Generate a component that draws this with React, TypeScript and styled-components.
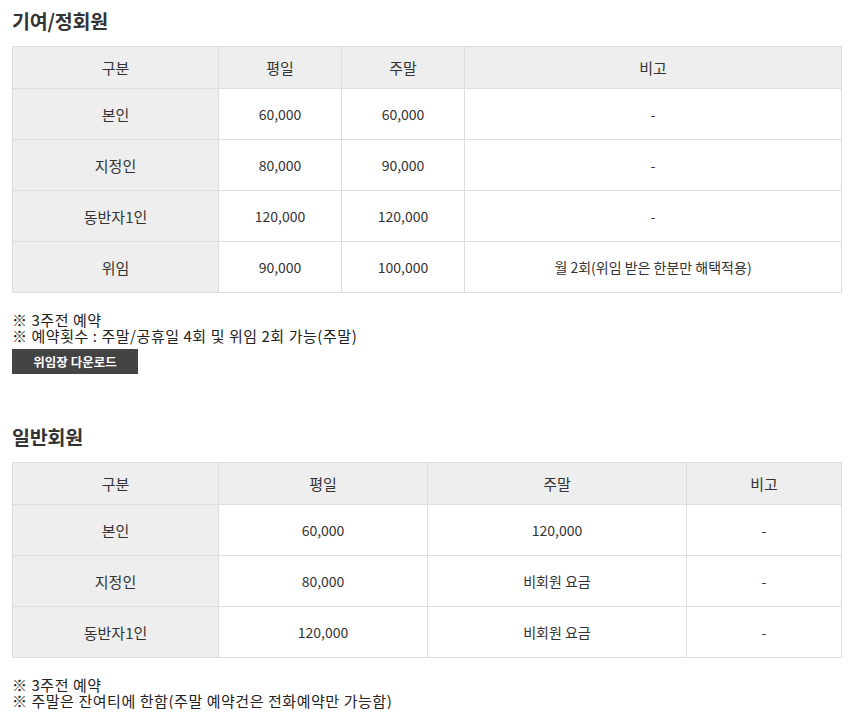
import React from 'react';
import styled, { createGlobalStyle } from 'styled-components';

const GlobalStyle = createGlobalStyle`
  body {
    margin: 0;
    background: #fff;
    font-family: "Noto Sans CJK KR", "Noto Sans", sans-serif;
    color: #333;
  }
`;

const Page = styled.div`
  padding: 4px 13px 0 12px;
  width: 830px;
`;

const Section = styled.section<{ gap?: number }>`
  margin-bottom: ${(p) => p.gap ?? 0}px;
`;

const Heading = styled.h3`
  margin: 0 0 9px;
  height: 33px;
  line-height: 33px;
  font-size: 19.5px;
  font-weight: 700;
  color: #333;
  letter-spacing: -0.2px;
`;

const Table = styled.table`
  width: 100%;
  border-collapse: collapse;
  table-layout: fixed;
  font-size: 14px;
  color: #333;
`;

const Th = styled.th<{ w?: number }>`
  width: ${(p) => (p.w ? `${p.w}px` : 'auto')};
  height: 41px;
  padding: 0;
  background: #eeeeee;
  border: 1px solid #dddddd;
  font-weight: 400;
  font-size: 15px;
  text-align: center;
`;

const Td = styled.td<{ head?: boolean }>`
  height: 50px;
  padding: 0;
  border: 1px solid #dddddd;
  text-align: center;
  background: ${(p) => (p.head ? '#eeeeee' : '#fff')};
  font-size: ${(p) => (p.head ? '15px' : '14px')};
`;

const Notes = styled.div`
  margin-top: 19px;
  font-size: 15px;
  line-height: 16px;
  letter-spacing: 0.55px;
  color: #222;
`;

const NoteLine = styled.div`
  height: 16px;
  white-space: nowrap;
`;

const DownloadButton = styled.button`
  display: block;
  margin-top: 5px;
  width: 126px;
  height: 25px;
  padding: 0;
  border: none;
  background: #444;
  color: #fff;
  font-family: inherit;
  font-size: 12.5px;
  font-weight: 700;
  cursor: pointer;
`;

type Row = string[];

const memberCols = [205, 122, 122];
const memberRows: Row[] = [
  ['본인', '60,000', '60,000', '-'],
  ['지정인', '80,000', '90,000', '-'],
  ['동반자1인', '120,000', '120,000', '-'],
  ['위임', '90,000', '100,000', '월 2회(위임 받은 한분만 해택적용)'],
];

const generalCols = [205, 208, 258];
const generalRows: Row[] = [
  ['본인', '60,000', '120,000', '-'],
  ['지정인', '80,000', '비회원 요금', '-'],
  ['동반자1인', '120,000', '비회원 요금', '-'],
];

const headers = ['구분', '평일', '주말', '비고'];

const FeeTable = ({ cols, rows }: { cols: number[]; rows: Row[] }) => (
  <Table>
    <thead>
      <tr>
        {headers.map((h, i) => (
          <Th key={h} w={cols[i]}>
            {h}
          </Th>
        ))}
      </tr>
    </thead>
    <tbody>
      {rows.map((r) => (
        <tr key={r[0]}>
          {r.map((c, i) => (
            <Td key={i} head={i === 0}>
              {c}
            </Td>
          ))}
        </tr>
      ))}
    </tbody>
  </Table>
);

export default function App() {
  return (
    <>
      <GlobalStyle />
      <Page>
        <Section gap={46}>
          <Heading>기여/정회원</Heading>
          <FeeTable cols={memberCols} rows={memberRows} />
          <Notes>
            <NoteLine>※ 3주전 예약</NoteLine>
            <NoteLine>※ 예약횟수 : 주말/공휴일 4회 및 위임 2회 가능(주말)</NoteLine>
          </Notes>
          <DownloadButton>위임장 다운로드</DownloadButton>
        </Section>
        <Section>
          <Heading>일반회원</Heading>
          <FeeTable cols={generalCols} rows={generalRows} />
          <Notes>
            <NoteLine>※ 3주전 예약</NoteLine>
            <NoteLine>※ 주말은 잔여티에 한함(주말 예약건은 전화예약만 가능함)</NoteLine>
          </Notes>
        </Section>
      </Page>
    </>
  );
}
